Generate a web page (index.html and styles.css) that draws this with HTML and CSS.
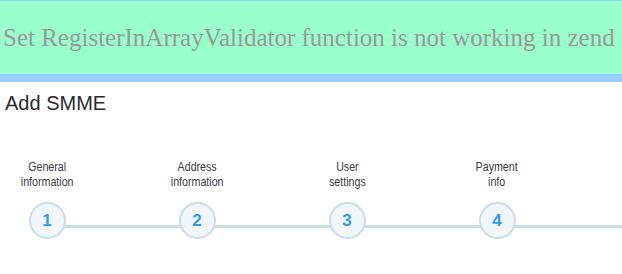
FILE: index.html
```html
<!DOCTYPE html>
<html lang="en">
<head>
<meta charset="UTF-8" />
<title>Add SMME</title>
<link rel="stylesheet" href="styles.css">
</head>
<body>

<div class="banner">Set RegisterInArrayValidator function is not working in zend</div>

<h2 class="page-title">Add SMME</h2>

<div class="wizard">
    <!-- step labels + numbered circles -->
    <div class="step">
        <div class="step-label">General<br>information</div>
        <div class="step-num">1</div>
    </div>
    <div class="step">
        <div class="step-label">Address<br>information</div>
        <div class="step-num">2</div>
    </div>
    <div class="step">
        <div class="step-label">User<br>settings</div>
        <div class="step-num">3</div>
    </div>
    <div class="step">
        <div class="step-label">Payment<br>info</div>
        <div class="step-num">4</div>
    </div>
</div>

</body>
</html>
```

FILE: styles.css
```css
/* --- Layout --------------------------------------------------------- */
body{
    margin:0;
    font-family:"Liberation Sans",Arial,sans-serif;
    background:#fff;
    overflow:hidden;
}

/* --- Banner --------------------------------------------------------- */
.banner{
    height:73px;
    display:flex;
    align-items:center;
    padding-left:3px;
    background:#99ffcc;
    border-top:1px solid #99ccff;
    border-bottom:8px solid #99ccff;
    font-family:"Liberation Serif","Times New Roman",serif;
    font-size:25px;
    color:#999;
    white-space:nowrap;
}

/* --- Title ---------------------------------------------------------- */
.page-title{
    margin:10px 0 0 5px;
    font-size:20px;
    font-weight:normal;
    color:#2a2a33;
}

/* --- Wizard steps --------------------------------------------------- */
.wizard{
    position:relative;
    display:flex;
    gap:70px;
    padding-left:7px;
    margin-top:44px;
}
.wizard::before{
    content:"";
    position:absolute;
    left:47px;
    right:0;
    bottom:11px;
    height:3px;
    background:#c9dcec;
}
.step{
    position:relative;
    width:80px;
    display:flex;
    flex-direction:column;
    align-items:center;
}
.step-label{
    font-size:13px;
    line-height:15px;
    text-align:center;
    color:#3a3a44;
    height:30px;
    transform:scaleX(.82);
}
.step-num{
    position:relative;
    width:33px;
    height:33px;
    margin-top:13px;
    border:2px solid #c9dcec;
    border-radius:50%;
    background:#f1f6fb;
    color:#3399ee;
    font-size:17px;
    font-weight:bold;
    display:flex;
    align-items:center;
    justify-content:center;
}
```
